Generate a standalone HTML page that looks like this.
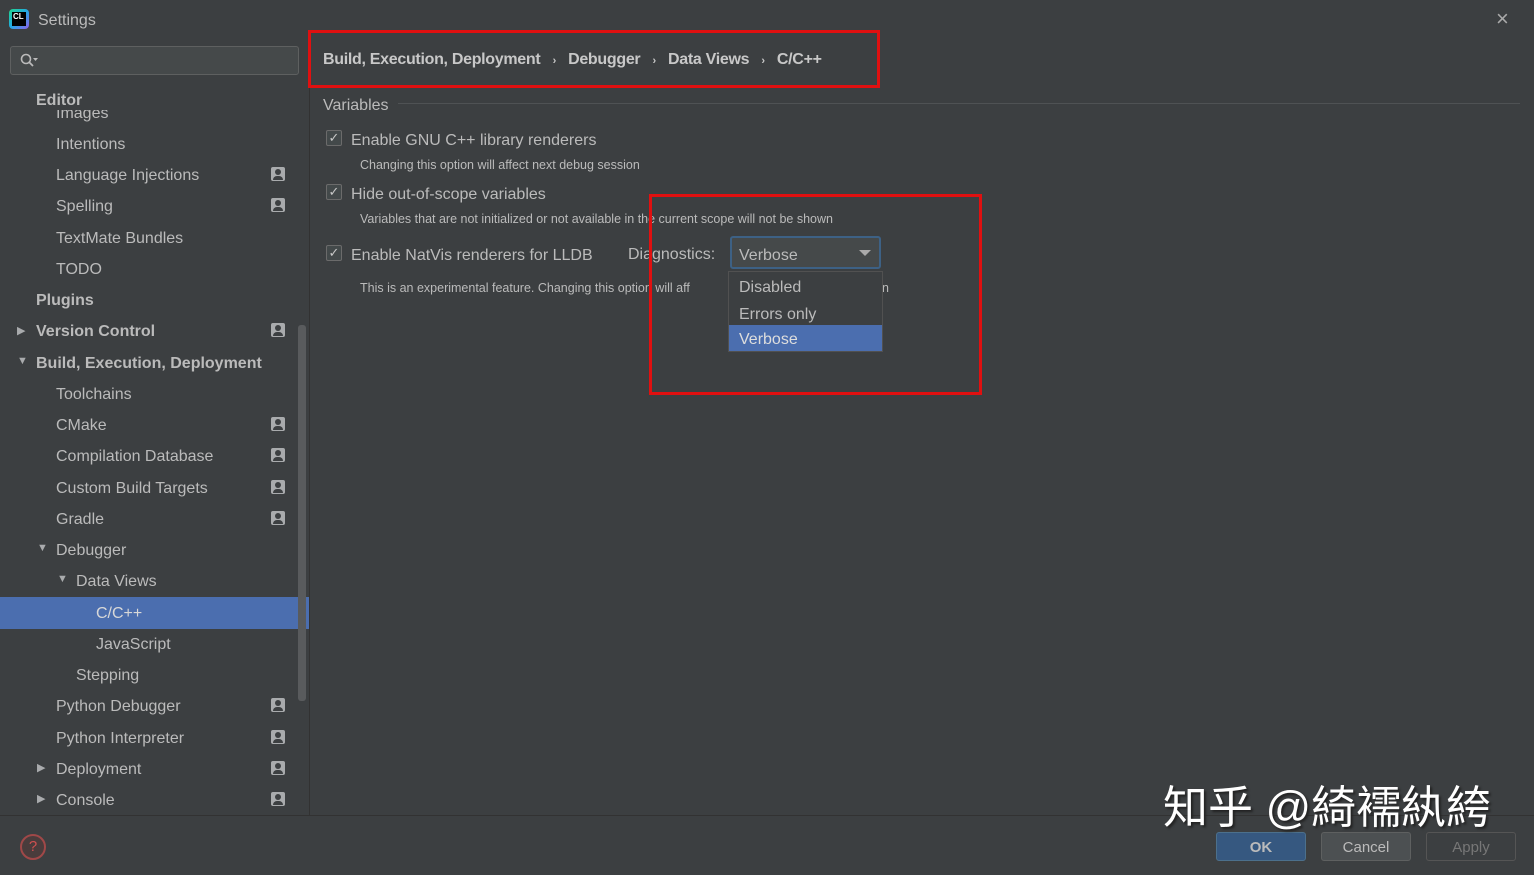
<!DOCTYPE html>
<html><head><meta charset="utf-8"><style>
*{margin:0;padding:0;box-sizing:border-box}
body{width:1534px;height:875px;background:#3c3f41;font-family:"Liberation Sans","DejaVu Sans",sans-serif;color:#bbbbbb;position:relative;overflow:hidden}
.a{position:absolute;white-space:nowrap}
.t{font-size:16px;line-height:20px;margin-top:2px}
.ic{position:absolute;width:14px;height:14px;background:#a9abad;border-radius:2px;left:271px}
.ic:after{content:"";position:absolute;left:4px;top:2px;width:6px;height:6px;border-radius:50%;background:#3c3f41}
.ic:before{content:"";position:absolute;left:2px;top:9px;width:10px;height:4px;border-radius:4px 4px 0 0;background:#3c3f41}
.cb{position:absolute;width:16px;height:16px;border:1px solid #6b6b6b;background:#43494a;border-radius:2px;left:326px;color:#c8c8c8;font-size:13px;line-height:14px;text-align:center}
.tri{position:absolute;font-size:11px;color:#a9abad}
.s{font-size:12.5px;margin-top:1px}
</style></head><body>
<div class="a" style="left:0;top:0;width:1534px;height:37px;background:#3c3f41"></div>
<div class="a" style="left:9px;top:9px;width:20px;height:20px;border-radius:4px;background:linear-gradient(135deg,#21d789,#22a7e6,#8e5ee6)"></div>
<div class="a" style="left:12px;top:12px;width:14px;height:14px;background:#000;color:#fff;font-size:8px;font-weight:bold;line-height:10px;padding-left:1px">CL</div>
<div class="a t" style="left:38px;top:9px;color:#bbbbbb">Settings</div>
<div class="a" style="left:1496px;top:6px;font-size:22px;color:#aaa">×</div>

<div class="a" style="left:10px;top:46px;width:289px;height:29px;border:1px solid #5e6060;border-radius:3px;background:#45494a"></div>
<svg class="a" style="left:19px;top:52px" width="20" height="16"><circle cx="7" cy="7" r="4.5" fill="none" stroke="#bbb" stroke-width="1.6"/><line x1="10" y1="10" x2="14" y2="14" stroke="#bbb" stroke-width="1.8"/><path d="M14 6h5l-2.5 3z" fill="#bbb"/></svg>

<div class="a t" style="left:56px;top:102px;clip-path:inset(6px 0 0 0)">Images</div>
<div class="a" style="left:0;top:86px;width:296px;height:24px;background:#3c3f41"></div>
<div class="a t" style="left:36px;top:89px;font-weight:bold">Editor</div>
<div class="a t" style="left:56px;top:133px">Intentions</div>
<div class="a t" style="left:56px;top:164px">Language Injections</div><div class="ic" style="top:167px"></div>
<div class="a t" style="left:56px;top:195px">Spelling</div><div class="ic" style="top:198px"></div>
<div class="a t" style="left:56px;top:227px">TextMate Bundles</div>
<div class="a t" style="left:56px;top:258px">TODO</div>
<div class="a t" style="left:36px;top:289px;font-weight:bold">Plugins</div>
<div class="tri" style="left:17px;top:324px">▶</div><div class="a t" style="left:36px;top:320px;font-weight:bold">Version Control</div><div class="ic" style="top:323px"></div>
<div class="tri" style="left:17px;top:355px">▼</div><div class="a t" style="left:36px;top:352px;font-weight:bold">Build, Execution, Deployment</div>
<div class="a t" style="left:56px;top:383px">Toolchains</div>
<div class="a t" style="left:56px;top:414px">CMake</div><div class="ic" style="top:417px"></div>
<div class="a t" style="left:56px;top:445px">Compilation Database</div><div class="ic" style="top:448px"></div>
<div class="a t" style="left:56px;top:477px">Custom Build Targets</div><div class="ic" style="top:480px"></div>
<div class="a t" style="left:56px;top:508px">Gradle</div><div class="ic" style="top:511px"></div>
<div class="tri" style="left:37px;top:542px">▼</div><div class="a t" style="left:56px;top:539px">Debugger</div>
<div class="tri" style="left:57px;top:573px">▼</div><div class="a t" style="left:76px;top:570px">Data Views</div>
<div class="a" style="left:0;top:597px;width:309px;height:32px;background:#4b6eaf"></div>
<div class="a t" style="left:96px;top:602px;color:#d8d8d8">C/C++</div>
<div class="a t" style="left:96px;top:633px">JavaScript</div>
<div class="a t" style="left:76px;top:664px">Stepping</div>
<div class="a t" style="left:56px;top:695px">Python Debugger</div><div class="ic" style="top:698px"></div>
<div class="a t" style="left:56px;top:727px">Python Interpreter</div><div class="ic" style="top:730px"></div>
<div class="tri" style="left:37px;top:761px">▶</div><div class="a t" style="left:56px;top:758px">Deployment</div><div class="ic" style="top:761px"></div>
<div class="tri" style="left:37px;top:792px">▶</div><div class="a t" style="left:56px;top:789px">Console</div><div class="ic" style="top:792px"></div>
<div class="a" style="left:298px;top:325px;width:8px;height:376px;background:#595b5d;border-radius:3px"></div>
<div class="a" style="left:309px;top:37px;width:1px;height:778px;background:#323232"></div>

<div class="a" style="left:308px;top:30px;width:572px;height:58px;border:3px solid #e01010"></div>
<div class="a t" style="left:323px;top:48px;font-weight:bold;color:#c8c8c8;letter-spacing:-0.3px">Build, Execution, Deployment <span style="font-size:11px;margin:0 8px">›</span> Debugger <span style="font-size:11px;margin:0 8px">›</span> Data Views <span style="font-size:11px;margin:0 8px">›</span> C/C++</div>
<div class="a t" style="left:323px;top:94px">Variables</div>
<div class="a" style="left:398px;top:103px;width:1122px;height:1px;background:#4f5254"></div>
<div class="cb" style="top:130px">✓</div><div class="a t" style="left:351px;top:129px">Enable GNU C++ library renderers</div>
<div class="a s" style="left:360px;top:157px">Changing this option will affect next debug session</div>
<div class="cb" style="top:184px">✓</div><div class="a t" style="left:351px;top:183px">Hide out-of-scope variables</div>
<div class="a s" style="left:360px;top:211px">Variables that are not initialized or not available in the current scope will not be shown</div>
<div class="cb" style="top:245px">✓</div><div class="a t" style="left:351px;top:244px">Enable NatVis renderers for LLDB</div>
<div class="a t" style="left:628px;top:243px">Diagnostics:</div>
<div class="a s" style="left:360px;top:280px">This is an experimental feature. Changing this option will aff</div>
<div class="a s" style="left:882px;top:280px">n</div>
<div class="a" style="left:730px;top:236px;width:151px;height:33px;border:2px solid #3d6185;border-radius:3px;background:#45494a"></div>
<div class="a t" style="left:739px;top:244px">Verbose</div>
<div class="a" style="left:859px;top:250px;width:0;height:0;border-left:6px solid transparent;border-right:6px solid transparent;border-top:6px solid #aaa"></div>
<div class="a" style="left:728px;top:271px;width:155px;height:81px;background:#3c3f41;border:1px solid #515151"></div>
<div class="a t" style="left:739px;top:276px">Disabled</div>
<div class="a t" style="left:739px;top:303px">Errors only</div>
<div class="a" style="left:729px;top:325px;width:153px;height:26px;background:#4b6eaf"></div>
<div class="a t" style="left:739px;top:328px;color:#ddd">Verbose</div>
<div class="a" style="left:649px;top:194px;width:333px;height:201px;border:3px solid #e01010"></div>

<div class="a" style="left:0;top:815px;width:1534px;height:1px;background:#323232"></div>
<div class="a" style="left:20px;top:834px;width:26px;height:26px;border-radius:50%;background:#4a3c3c;border:2px solid #a04848;color:#d05050;font-size:15px;text-align:center;line-height:22px">?</div>
<div class="a" style="left:1216px;top:832px;width:90px;height:29px;background:#365880;border:1px solid #4c708c;border-radius:3px;color:#bbb;font-weight:bold;font-size:15px;text-align:center;line-height:29px">OK</div>
<div class="a" style="left:1321px;top:832px;width:90px;height:29px;background:#4c5052;border:1px solid #5e6060;border-radius:3px;color:#bbb;font-size:15px;text-align:center;line-height:29px">Cancel</div>
<div class="a" style="left:1426px;top:832px;width:90px;height:29px;background:#3c3f41;border:1px solid #555;border-radius:3px;color:#777;font-size:15px;text-align:center;line-height:29px">Apply</div>
<div class="a" style="left:1163px;top:781px;font-size:45px;line-height:54px;color:#fff;font-family:'Liberation Sans','Noto Sans CJK SC',sans-serif;text-shadow:2px 2px 2px #222">知乎 @綺襦紈絝</div>
</body></html>
